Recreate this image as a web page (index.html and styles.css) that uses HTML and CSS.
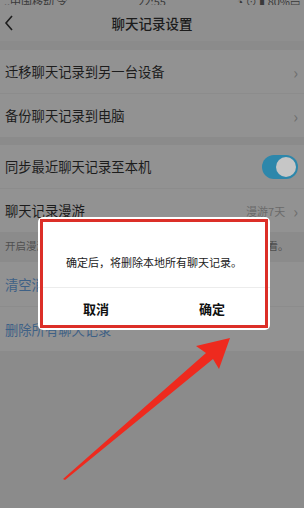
FILE: index.html
```html
<!DOCTYPE html>
<html>
<head>
  <title>聊天记录设置</title>
  <link rel="stylesheet" href="styles.css">
</head>
<body>
  <div id="screen">
    <div class="status-bar">
      <span>..中国移动 令</span>
      <span>22:55</span>
      <span>◔ ⊙ ▮ 80%▭</span>
    </div>
    <div class="nav-bar">
      <svg class="back" width="10" height="16" viewBox="0 0 10 16">
        <path d="M8 1 L2 8 L8 15" fill="none" stroke="#1e1e1e" stroke-width="1.6"/>
      </svg>
      <div class="title">聊天记录设置</div>
    </div>

    <div class="group first">
      <div class="row">
        <span>迁移聊天记录到另一台设备</span>
        <span class="arrow">›</span>
      </div>
      <div class="row">
        <span>备份聊天记录到电脑</span>
        <span class="arrow">›</span>
      </div>
    </div>

    <div class="group">
      <div class="row">
        <span>同步最近聊天记录至本机</span>
        <span class="switch"><span class="knob"></span></span>
      </div>
      <div class="row">
        <span>聊天记录漫游</span>
        <span class="side">漫游7天 <span class="arrow">›</span></span>
      </div>
    </div>
    <div class="note">开启漫游后，在其他设备上可同步漫游期内的聊天记录查看。</div>

    <div class="group links">
      <div class="row link">清空消息列表</div>
      <div class="row link">删除所有聊天记录</div>
    </div>

    <div id="dialog">
      <div class="dialog-msg">确定后，将删除本地所有聊天记录。</div>
      <div class="dialog-buttons">
        <div class="btn">取消</div>
        <div class="btn">确定</div>
      </div>
    </div>

    <svg id="pointer" width="304" height="508" viewBox="0 0 304 508">
      <path d="M63 479 L206 353 L196 346 L230 338 L219 369 L213 359 L65 480 Z" fill="#ee2a1e"/>
    </svg>
  </div>
</body>
</html>
```

FILE: styles.css
```css
body {
  margin: 0;
  background-color: #8b8b8b;
  font-family: "Noto Sans CJK SC", "Noto Sans", sans-serif;
  color: #1c1c1c;
}

#screen {
  position: relative;
  width: 304px;
  height: 508px;
  overflow: hidden;
  background-color: #8b8b8b;
}

.status-bar {
  height: 5px;
  overflow: hidden;
  display: flex;
  justify-content: space-between;
  align-items: flex-end;
  padding: 0 4px;
  font-size: 11px;
  line-height: 10px;
  color: #3a3a3a;
  background-color: #8f8f8f;
}

.status-bar span {
  margin-bottom: -1px;
}

.nav-bar {
  height: 36px;
  display: flex;
  align-items: center;
  justify-content: center;
  position: relative;
  background-color: #8f8f8f;
}

.back {
  position: absolute;
  left: 4px;
  top: 10px;
}

.title {
  font-size: 13.5px;
  font-weight: 500;
}

.group {
  margin-top: 8px;
  background-color: #929292;
}

.group.first {
  margin-top: 9px;
}

.row {
  height: 43px;
  display: flex;
  align-items: center;
  justify-content: space-between;
  padding: 0 6px 0 5px;
  font-size: 13.3px;
  border-bottom: 1px solid #8c8c8c;
}

.row:last-child {
  border-bottom: none;
}

.arrow {
  color: #6e6e6e;
  font-size: 16px;
}

.side {
  font-size: 11px;
  color: #6a6a6a;
  display: flex;
  align-items: center;
  gap: 8px;
}

.switch {
  width: 36px;
  height: 24px;
  border-radius: 12px;
  background-color: #2d87ab;
  display: flex;
  align-items: center;
  justify-content: flex-end;
  padding: 0 2px;
  box-sizing: border-box;
}

.knob {
  width: 20px;
  height: 20px;
  border-radius: 50%;
  background-color: #c6c6c6;
}

.note {
  height: 28px;
  line-height: 28px;
  padding: 0 5px;
  font-size: 10.5px;
  color: #4f4f4f;
  white-space: nowrap;
  overflow: hidden;
}

.links {
  margin-top: 2px;
}

.link {
  color: #3e6186;
  height: 44px;
}

#dialog {
  position: absolute;
  left: 38px;
  top: 217px;
  width: 232px;
  height: 113px;
  background-color: #fff;
  border-radius: 5px;
  display: flex;
  flex-direction: column;
}

#dialog::after {
  content: "";
  position: absolute;
  left: 2px;
  top: 2px;
  right: 2px;
  bottom: 2px;
  border: 3px solid #dc2f28;
}

.dialog-msg {
  height: 71px;
  box-sizing: border-box;
  padding-top: 20px;
  display: flex;
  align-items: center;
  justify-content: center;
  font-size: 11px;
  color: #222;
  border-bottom: 1px solid #ececec;
}

.dialog-buttons {
  flex: 1;
  display: flex;
  padding-bottom: 2px;
}

.btn {
  flex: 1;
  display: flex;
  align-items: center;
  justify-content: center;
  font-size: 13px;
  font-weight: bold;
  color: #111;
}

#pointer {
  position: absolute;
  left: 0;
  top: 0;
}
```
